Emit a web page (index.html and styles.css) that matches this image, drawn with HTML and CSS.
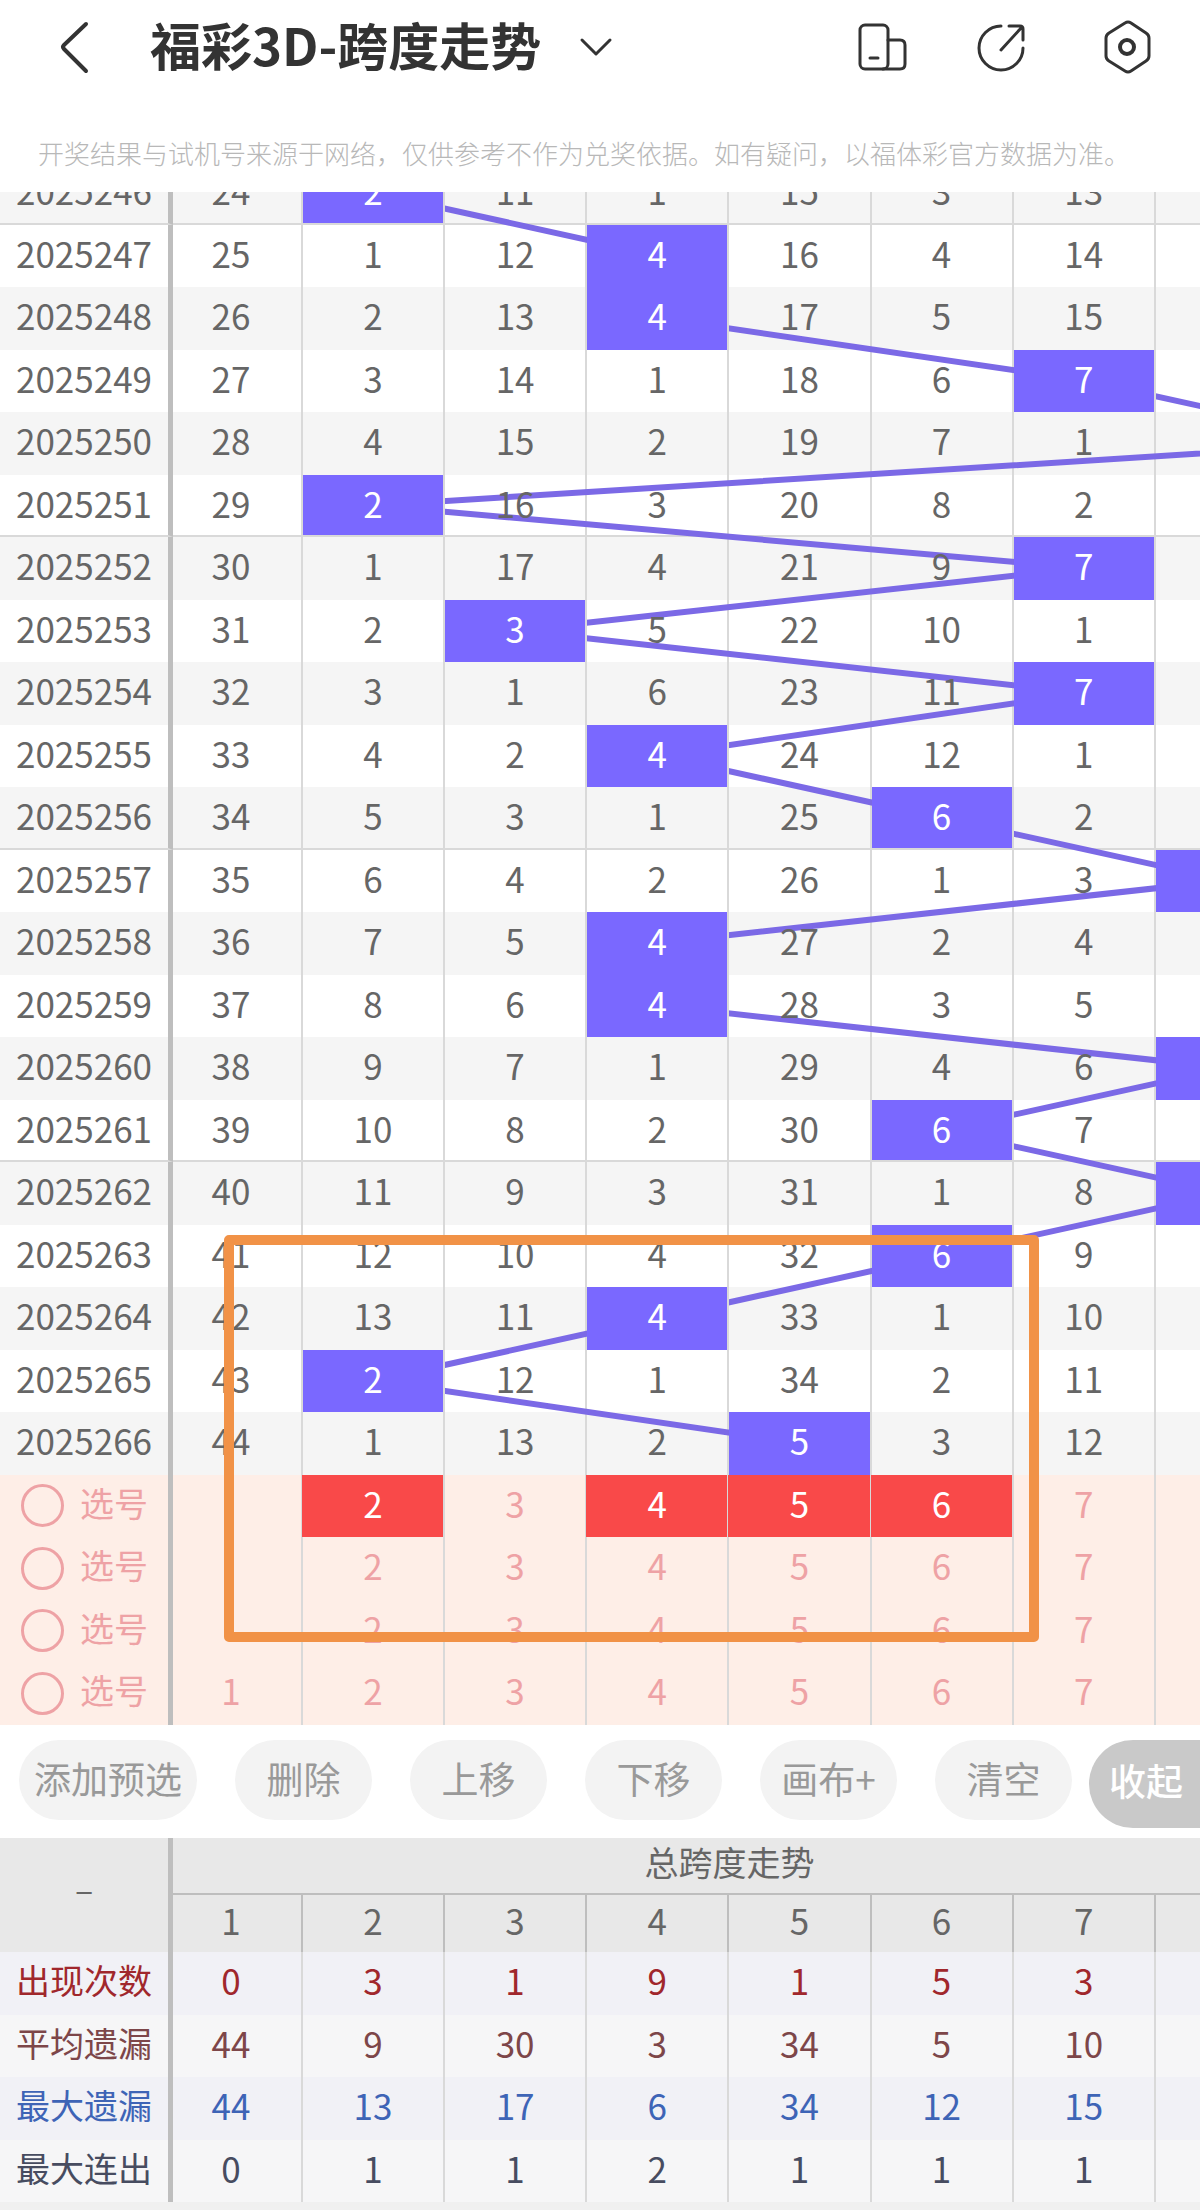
FILE: index.html
```html
<!DOCTYPE html>
<html lang="zh-CN">
<head>
    <meta charset="UTF-8">
    <meta name="viewport" content="width=device-width, initial-scale=1.0">
    <title>福彩3D-跨度走势</title>
    <link rel="stylesheet" href="styles.css">
</head>
<body>
    <header class="topbar">
        <button class="icon-btn back" aria-label="返回">
            <svg width="50" height="60" viewBox="0 0 50 60"><path d="M36 7 L14 28 Q12 30 14 32 L36 54" stroke-width="4"/></svg>
        </button>
        <h1>福彩3D-跨度走势</h1>
        <button class="icon-btn" aria-label="切换走势">
            <svg width="34" height="24" viewBox="0 0 34 24"><path d="M3 5 L17 19 L31 5" stroke-width="3"/></svg>
        </button>
        <div class="actions">
            <button class="icon-btn" aria-label="横屏">
                <svg width="52" height="54" viewBox="0 0 52 54">
                    <rect x="4" y="5" width="28" height="44" rx="5"/>
                    <path d="M32 20 H44 Q49 20 49 25 V44 Q49 49 44 49 H27"/>
                    <path d="M14 38 H22"/>
                </svg>
            </button>
            <button class="icon-btn" aria-label="分享">
                <svg width="52" height="54" viewBox="0 0 52 54">
                    <path d="M24 6 A22 22 0 1 0 46 28"/>
                    <path d="M24 30 L45 7 M32 6 H43 Q46 6 46 9 V20"/>
                </svg>
            </button>
            <button class="icon-btn" aria-label="设置">
                <svg width="60" height="54" viewBox="0 0 60 54">
                    <path d="M27 3 Q30 1 33 3 L48 13 Q51 15 51 18 V36 Q51 39 48 41 L33 51 Q30 53 27 51 L11 41 Q8 39 8 36 V18 Q8 15 11 13 Z"/>
                    <circle cx="29" cy="27" r="7" stroke-width="4"/>
                </svg>
            </button>
        </div>
    </header>
    <p class="notice">开奖结果与试机号来源于网络，仅供参考不作为兑奖依据。如有疑问，以福体彩官方数据为准。</p>

    <main class="chart">
        <div class="board">
            <table class="grid">
                <colgroup><col class="col-name"><col class="col-first"><col span="7"></colgroup>
                <tbody id="draws"></tbody>
                <tbody id="picks"></tbody>
            </table>
            <svg class="trend" viewBox="0 0 1298 1563" preserveAspectRatio="none"><polyline id="trendLine"/></svg>
        </div>
        <div class="mark"></div>
    </main>

    <div class="toolbar">
        <button>添加预选</button>
        <button>删除</button>
        <button>上移</button>
        <button>下移</button>
        <button>画布+</button>
        <button>清空</button>
        <button class="fold">收起</button>
    </div>

    <section class="summary">
        <table class="grid">
            <colgroup><col class="col-name"><col class="col-first"><col span="7"></colgroup>
            <thead>
                <tr><th rowspan="2" class="corner">–</th><th colspan="8" class="group">总跨度走势</th></tr>
                <tr><td class="lead">1</td><td>2</td><td>3</td><td>4</td><td>5</td><td>6</td><td>7</td><td></td></tr>
            </thead>
            <tbody>
                <tr class="times"><th>出现次数</th><td class="lead">0</td><td>3</td><td>1</td><td>9</td><td>1</td><td>5</td><td>3</td><td></td></tr>
                <tr class="average"><th>平均遗漏</th><td class="lead">44</td><td>9</td><td>30</td><td>3</td><td>34</td><td>5</td><td>10</td><td></td></tr>
                <tr class="longest"><th>最大遗漏</th><td class="lead">44</td><td>13</td><td>17</td><td>6</td><td>34</td><td>12</td><td>15</td><td></td></tr>
                <tr class="streak"><th>最大连出</th><td class="lead">0</td><td>1</td><td>1</td><td>2</td><td>1</td><td>1</td><td>1</td><td></td></tr>
            </tbody>
        </table>
    </section>

    <script src="script.js"></script>
</body>
</html>
```
FILE: styles.css
```css
* {
    box-sizing: border-box;
}
body {
    margin: 0;
    background: #f0f0f0;
    color: #666;
    font-family: "Noto Sans CJK SC", sans-serif;
    overflow-x: hidden;
}
button {
    border: 0;
    padding: 0;
    background: none;
    color: inherit;
    font: inherit;
}

/* header */
.topbar {
    display: flex;
    align-items: center;
    height: 94px;
    padding: 0 42px 0 50px;
    background: #fff;
}
.topbar h1 {
    margin: 0 38px 0 50px;
    padding-bottom: 6px;
    color: #333;
    font-size: 51px;
    line-height: 60px;
}
.icon-btn {
    display: flex;
}
.icon-btn svg {
    fill: none;
    stroke: #333;
    stroke-width: 3;
    stroke-linecap: round;
    stroke-linejoin: round;
}
.actions {
    display: flex;
    gap: 69px;
    margin-left: auto;
}
.notice {
    margin: 0;
    padding: 40px 0 20px 38px;
    background: #fff;
    color: #b8b8b8;
    font-size: 26px;
    font-weight: 300;
    line-height: 38px;
    white-space: nowrap;
}

/* tables */
.grid {
    width: 100%;
    table-layout: fixed;
    border-collapse: separate;
    border-spacing: 0;
    font-size: 35px;
    line-height: 48px;
    text-align: center;
}
.col-name {
    width: 13.33%;
}
.col-first {
    width: 10%;
}
.grid th,
.grid td {
    padding: 0 0 7px;
    border-right: 2px solid #d9d9d9;
    background-clip: padding-box;
    font-weight: 400;
}
.grid tr > th:first-child {
    border-right: 5px solid #bebebe;
    font-size: 34px;
}
.grid .lead {
    padding-right: 12px;
}

/* trend board */
.chart {
    position: relative;
    overflow: hidden;
    background: #fff;
}
.board {
    position: relative;
    width: 108.17%;
    margin-top: -30px;
}
#draws tr {
    height: 62px;
}
#draws tr:nth-child(odd) {
    height: 63px;
    background: #f5f5f5;
}
#draws tr:nth-child(5n + 1) > * {
    padding-bottom: 5px;
    border-bottom: 2px solid #d9d9d9;
}
#draws tr:last-child > * {
    padding-bottom: 7px;
    border-bottom: 0;
}
#draws tr > th:first-child {
    font-size: 35px;
}
.trend {
    position: absolute;
    top: 0;
    left: 0;
    z-index: 1;
    width: 100%;
    height: 100%;
    overflow: visible;
}
.trend polyline {
    fill: none;
    stroke: #7b69e6;
    stroke-width: 6;
    vector-effect: non-scaling-stroke;
}
#draws span {
    position: relative;
    z-index: 2;
}
#draws .hit {
    position: relative;
    z-index: 2;
    background-color: #7a68ff;
    color: #fff;
}

/* picks */
#picks tr {
    height: 62px;
    background: #feeee7;
    color: #eea2a5;
}
#picks tr:nth-child(even) {
    height: 63px;
}
#picks label {
    display: flex;
    align-items: center;
    gap: 16px;
    padding-left: 21px;
}
#picks input {
    appearance: none;
    width: 43px;
    height: 43px;
    margin: 6px 0 0;
    border: 3px solid #eea2a5;
    border-radius: 50%;
}
#picks td button {
    width: 100%;
}
#picks .on {
    background-color: #f94949;
    box-shadow: -1px 0 0 #f94949;
    color: #fff;
}
.mark {
    position: absolute;
    top: 1043px;
    left: 18.67%;
    z-index: 3;
    width: 67.9%;
    height: 407px;
    border: 10px solid #f19247;
    border-radius: 5px;
}

/* toolbar */
.toolbar {
    display: flex;
    gap: 38px;
    height: 113px;
    padding: 15px 0 0 19px;
    background: #fff;
    color: #999;
    font-size: 37px;
}
.toolbar button {
    min-width: 137px;
    height: 80px;
    padding: 0 15px 5px;
    border-radius: 40px;
    background: #f3f3f3;
    white-space: nowrap;
}
.toolbar .fold {
    min-width: 110px;
    height: 88px;
    margin-left: -21px;
    flex: 1;
    padding: 0 0 9px 20px;
    border-radius: 44px 0 0 44px;
    background: #c9c9c9;
    color: #fff;
    font-weight: 500;
    text-align: left;
}

/* summary */
.summary {
    overflow: hidden;
}
.summary .grid {
    width: 108.17%;
}
.summary thead {
    background: #e8e8e8;
}
.summary thead tr {
    height: 57px;
}
.summary thead td {
    border-color: #bebebe;
}
.summary thead .group {
    padding-right: 12px;
    border-right: 0;
    border-bottom: 2px solid #bebebe;
    font-size: 34px;
}
.summary .corner {
    padding-bottom: 12px;
}
.summary tbody tr {
    height: 62px;
    background: #f6f6f7;
}
.summary tbody tr:nth-child(odd) {
    height: 63px;
    background: #f1f1f6;
}
.summary .times {
    color: #a0272c;
}
.summary .average {
    color: #7d4649;
}
.summary .longest {
    color: #3e64b6;
}
.summary .streak {
    color: #474c60;
}
```
FILE: script.js
```js
// span of every draw, from 2025246 on
const first = 2025246;
const spans = [2, 4, 4, 7, 9, 2, 7, 3, 7, 4, 6, 8, 4, 4, 8, 6, 8, 6, 4, 2, 5];
// draws missed by span 1-7 before the first row
const missed = [23, 0, 10, 0, 14, 2, 12];

let rows = '';
spans.forEach((span, i) => {
    rows += `<tr><th>${first + i}</th>`;
    for (let n = 1; n <= 8; n++) {
        missed[n - 1] = n === span ? 0 : missed[n - 1] + 1;
        const text = n > 7 ? '' : missed[n - 1] || n;
        const cls = n === span ? 'hit' : n === 1 ? 'lead' : '';
        rows += `<td class="${cls}"><span>${text}</span></td>`;
    }
    rows += '</tr>';
});
document.getElementById('draws').innerHTML = rows;

const chosen = [2, 4, 5, 6];
let picks = '';
for (let i = 0; i < 4; i++) {
    picks += '<tr><th><label><input type="checkbox">选号</label></th>';
    for (let n = 1; n <= 8; n++) {
        const hidden = n > 7 || (n === 1 && i < 3);
        const cls = i === 0 && chosen.includes(n) ? 'on' : n === 1 ? 'lead' : '';
        picks += `<td class="${cls}">${hidden ? '' : `<button>${n}</button>`}</td>`;
    }
    picks += '</tr>';
}
document.getElementById('picks').innerHTML = picks;

// centre of each drawn cell
const points = spans.map((span, i) => `${374 + 142 * (span - 2)},${31 + 62.5 * i}`);
document.getElementById('trendLine').setAttribute('points', points.join(' '));
```
